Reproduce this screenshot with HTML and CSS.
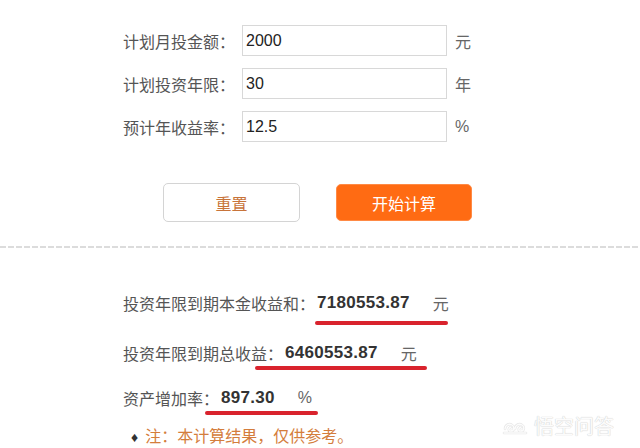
FILE: index.html
```html
<!DOCTYPE html>
<html lang="zh-CN">
<head>
    <meta charset="UTF-8">
    <meta name="viewport" content="width=device-width, initial-scale=1.0">
    <title>定投计算器</title>
    <link rel="stylesheet" href="styles.css">
</head>
<body>
    <div class="calc">
        <!-- 输入区 -->
        <div class="form">
            <div class="row">
                <label class="label">计划月投金额：</label>
                <input class="field" type="text" value="2000">
                <span class="unit">元</span>
            </div>
            <div class="row">
                <label class="label">计划投资年限：</label>
                <input class="field" type="text" value="30">
                <span class="unit">年</span>
            </div>
            <div class="row">
                <label class="label">预计年收益率：</label>
                <input class="field" type="text" value="12.5">
                <span class="unit">%</span>
            </div>
        </div>

        <div class="buttons">
            <button class="btn btn-reset">重置</button>
            <button class="btn btn-start">开始计算</button>
        </div>

        <div class="dash"></div>

        <!-- 结果区 -->
        <div class="results">
            <div class="result">
                <span class="rlabel">投资年限到期本金收益和：</span><b class="num">7180553.87</b><span class="runit">元</span>
                <i class="mark mark1"></i>
            </div>
            <div class="result">
                <span class="rlabel">投资年限到期总收益：</span><b class="num">6460553.87</b><span class="runit">元</span>
                <i class="mark mark2"></i>
            </div>
            <div class="result">
                <span class="rlabel">资产增加率：</span><b class="num">897.30</b><span class="runit">%</span>
                <i class="mark mark3"></i>
            </div>
            <div class="note"><span class="dot">♦</span>注：本计算结果，仅供参考。</div>
        </div>

        <div class="watermark">
            <svg width="26" height="18" viewBox="0 0 26 18">
                <path d="M3 12c0-4 4-6 7-4s2 6-1 6-3-3 0-4M13 12c0-4 4-6 7-4s2 6-1 6-3-3 0-4M2 16h22" fill="none" stroke="#e6e6e6" stroke-width="2.6" stroke-linecap="round"/>
                <path d="M3 12c0-4 4-6 7-4s2 6-1 6-3-3 0-4M13 12c0-4 4-6 7-4s2 6-1 6-3-3 0-4M2 16h22" fill="none" stroke="#fcfcfc" stroke-width="1.4" stroke-linecap="round"/>
            </svg>
            <span>悟空问答</span>
        </div>
    </div>
</body>
</html>
```

FILE: styles.css
```css
body {
    margin: 0;
    background-color: #fff;
    color: #555;
    font-family: "Liberation Sans", "Noto Sans CJK SC", sans-serif;
}
.calc {
    position: relative;
    width: 640px;
    height: 448px;
    overflow: hidden;
}
.form {
    padding: 25px 0 0 123px;
}
.row {
    display: flex;
    align-items: center;
    height: 31px;
    margin-bottom: 12px;
}
.label {
    width: 119px;
    font-size: 16px;
    color: #555;
}
.field {
    box-sizing: border-box;
    width: 205px;
    height: 31px;
    border: 1px solid #d8d8d8;
    padding: 0 3px;
    font-family: "Liberation Sans", sans-serif;
    font-size: 16px;
    color: #222;
    outline: none;
}
.unit {
    margin-left: 8px;
    font-size: 16px;
    color: #666;
}
/* 按钮 */
.buttons {
    display: flex;
    align-items: center;
    padding-left: 163px;
    margin-top: 41px;
}
.btn {
    font-family: "Noto Sans CJK SC", sans-serif;
    font-size: 16px;
    border-radius: 5px;
    cursor: pointer;
}
.btn-reset {
    width: 137px;
    height: 39px;
    background: #fff;
    border: 1px solid #d4d4d4;
    color: #c8743a;
}
.btn-start {
    width: 136px;
    height: 37px;
    margin-left: 36px;
    background: #ff6b13;
    border: 1px solid #ff8a45;
    color: #fff;
}
.dash {
    height: 2px;
    margin-top: 24px;
    background: repeating-linear-gradient(90deg, #dcdcdc 0 6px, transparent 6px 8px);
}
/* 结果 */
.results {
    padding: 43px 0 0 123px;
}
.result {
    position: relative;
    display: flex;
    align-items: center;
    height: 24px;
    margin-bottom: 26px;
    font-size: 16px;
    color: #555;
}
.result:nth-child(2) {
    margin-bottom: 21px;
}
.num {
    margin-left: 2px;
    font-family: "Liberation Sans", sans-serif;
    font-size: 17px;
    letter-spacing: 0.3px;
    color: #333;
}
.runit {
    margin-left: 23px;
    color: #666;
}
.mark {
    position: absolute;
    height: 4px;
    border-radius: 2px;
    background: #d9232d;
}
.mark1 {
    left: 192px;
    width: 133px;
    top: 30px;
}
.mark2 {
    left: 132px;
    width: 172px;
    top: 25px;
}
.mark3 {
    left: 82px;
    width: 113px;
    top: 25px;
}
.note {
    margin-top: -13px;
    font-size: 16px;
    color: #d47d3c;
}
.dot {
    font-size: 14px;
    color: #333;
    margin: 0 7px 0 8px;
}
.watermark {
    position: absolute;
    right: 26px;
    bottom: 8px;
    display: flex;
    align-items: center;
    gap: 6px;
    font-family: "Noto Sans CJK SC", sans-serif;
    font-size: 20px;
    color: #fcfcfc;
    text-shadow: 0 0 1px #d0d0d0, 0 0 1px #d0d0d0;
}
```
